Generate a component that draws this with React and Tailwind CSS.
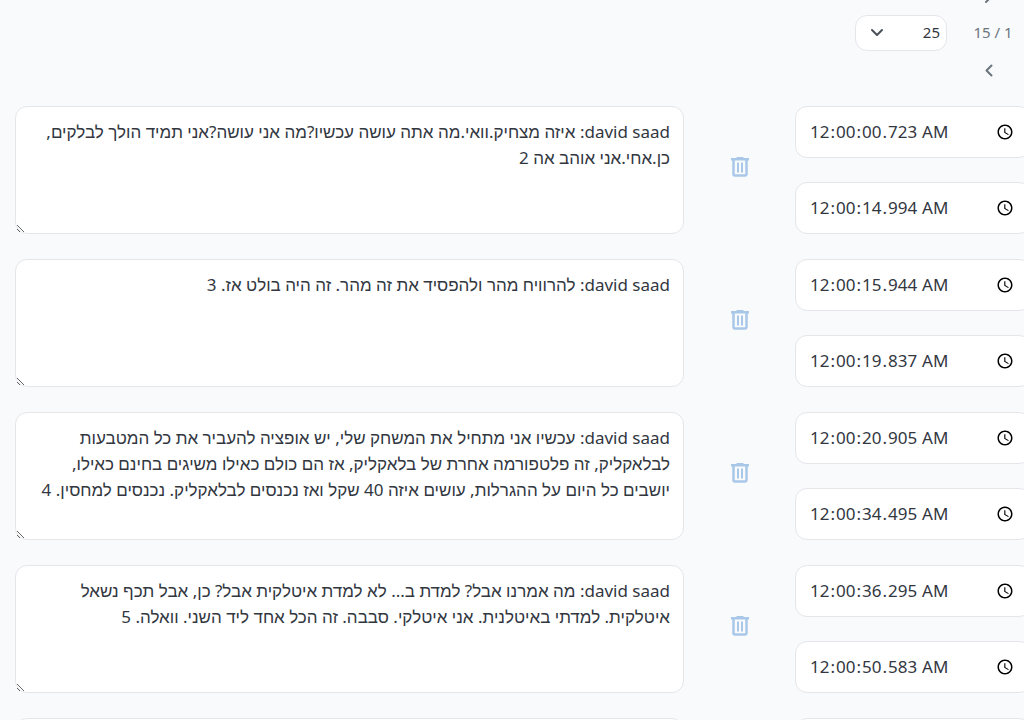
import React, { useState } from "react";

const initialLines = [
  { id: 2, start: "00:00:00.723", end: "00:00:14.994", text: "david saad: איזה מצחיק.וואי.מה אתה עושה עכשיו?מה אני עושה?אני תמיד הולך לבלקים, כן.אחי.אני אוהב אה 2" },
  { id: 3, start: "00:00:15.944", end: "00:00:19.837", text: "david saad: להרוויח מהר ולהפסיד את זה מהר. זה היה בולט אז. 3" },
  { id: 4, start: "00:00:20.905", end: "00:00:34.495", text: "david saad: עכשיו אני מתחיל את המשחק שלי, יש אופציה להעביר את כל המטבעות לבלאקליק, זה פלטפורמה אחרת של בלאקליק, אז הם כולם כאילו משיגים בחינם כאילו, יושבים כל היום על ההגרלות, עושים איזה 40 שקל ואז נכנסים לבלאקליק. נכנסים למחסין. 4" },
  { id: 5, start: "00:00:36.295", end: "00:00:50.583", text: "david saad: מה אמרנו אבל? למדת ב... לא למדת איטלקית אבל? כן, אבל תכף נשאל איטלקית. למדתי באיטלנית. אני איטלקי. סבבה. זה הכל אחד ליד השני. וואלה. 5" },
  { id: 6, start: "00:00:51.000", end: "00:00:55.000", text: "" },
];

const TrashIcon = () => (
  <svg width="18" height="20" viewBox="0 0 18 20" fill="none" stroke="currentColor" strokeWidth="2.5" aria-hidden="true">
    <path d="M0 2.2h18M5.5 1.2h7M2.5 2v15a1.5 1.5 0 0 0 1.5 1.5h10a1.5 1.5 0 0 0 1.5-1.5V2" />
    <path strokeWidth="2" d="M7 5.5v10M11 5.5v10" />
  </svg>
);

const Chevron = ({ d }) => (
  <svg width="16" height="16" viewBox="0 0 16 16" fill="none" stroke="currentColor" strokeWidth="2" strokeLinecap="round" strokeLinejoin="round" aria-hidden="true">
    <path d={d} />
  </svg>
);

const TimeInput = ({ label, value, onChange }) => (
  <input
    type="time"
    step="0.001"
    aria-label={label}
    value={value}
    onChange={(e) => onChange(e.target.value)}
    className="h-[52px] w-full rounded-xl border border-[#e4e6ea] bg-white px-[13px] text-[17px] text-[#32373f] focus:outline-none"
  />
);

const SubtitleRow = ({ line, onChange, onDelete }) => (
  <div className="grid grid-cols-[minmax(0,1fr)_111px_236px]">
    <textarea
      dir="rtl"
      aria-label={`כתובית ${line.id}`}
      value={line.text}
      onChange={(e) => onChange(line.id, "text", e.target.value)}
      className="block h-32 w-full resize rounded-xl border border-[#e4e6ea] bg-white px-[13px] py-3 text-[17px] leading-[26px] text-[#32373f] focus:outline-none"
    />
    <div className="flex items-center justify-center pb-1.5">
      <button type="button" aria-label="מחיקה" onClick={() => onDelete(line.id)} className="text-[#a9c7e8]">
        <TrashIcon />
      </button>
    </div>
    <div className="flex flex-col gap-6">
      <TimeInput label="התחלה" value={line.start} onChange={(v) => onChange(line.id, "start", v)} />
      <TimeInput label="סיום" value={line.end} onChange={(v) => onChange(line.id, "end", v)} />
    </div>
  </div>
);

const App = () => {
  const [lines, setLines] = useState(initialLines);
  const [pageSize, setPageSize] = useState("25");

  const handleChange = (id, key, value) => {
    setLines(lines.map((line) => (line.id === id ? { ...line, [key]: value } : line)));
  };

  const handleDelete = (id) => setLines(lines.filter((line) => line.id !== id));

  return (
    <div className="h-screen overflow-hidden bg-[#f8fafc] font-['Noto_Sans','Liberation_Sans',sans-serif]">
      <header dir="rtl" className="flex items-center pr-[11px] pb-[18px] text-[15px] text-[#6c757d]">
        <div className="-mt-[22px] flex flex-col items-center gap-px">
          <button type="button" aria-label="הקודם" className="flex h-9 w-10 items-center justify-center">
            <Chevron d="M1 4l5 5-5 5" />
          </button>
          <span className="flex h-9 items-center pb-0.5">1 / 15</span>
          <button type="button" aria-label="הבא" className="flex h-9 w-10 items-center justify-center">
            <Chevron d="M6.5 3.5l-5 5 5 5" />
          </button>
        </div>
        <div className="relative mr-[26px] -mt-[22px]">
          <select
            aria-label="שורות בעמוד"
            value={pageSize}
            onChange={(e) => setPageSize(e.target.value)}
            className="h-9 w-[92px] appearance-none rounded-xl border border-[#e4e6ea] bg-white pr-1.5 pb-0.5 pl-9 text-[15px] text-[#32373f] focus:outline-none"
          >
            <option>25</option>
            <option>50</option>
            <option>100</option>
          </select>
          <span className="pointer-events-none absolute inset-y-0 left-3.5 flex items-center text-[#4b5158]">
            <Chevron d="M3 5l5 5 5-5" />
          </span>
        </div>
      </header>
      <main className="-mr-[7px] flex flex-col gap-[25px] pl-[15px]">
        {lines.map((line) => (
          <SubtitleRow key={line.id} line={line} onChange={handleChange} onDelete={handleDelete} />
        ))}
      </main>
    </div>
  );
};

export default App;
